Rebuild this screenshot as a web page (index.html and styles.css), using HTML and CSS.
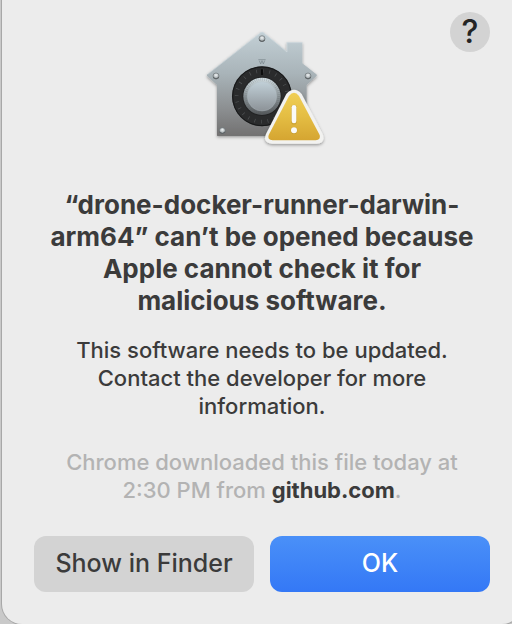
FILE: index.html
```html
<!DOCTYPE html>
<html lang="en">
<head>
<meta charset="utf-8">
<meta name="viewport" content="width=device-width, initial-scale=1">
<title>Gatekeeper alert</title>
<link rel="stylesheet" href="styles.css">
</head>
<body>
<main class="dialog" role="alertdialog" aria-labelledby="title" aria-describedby="message">
  <button class="help" type="button" aria-label="Help">?</button>
  <svg class="icon" viewBox="-6 0 408 408" aria-hidden="true">
    <defs>
      <linearGradient id="house" x1="0" y1="0" x2="0" y2="1">
        <stop offset="0" stop-color="#c3d0d6"/>
        <stop offset=".4" stop-color="#a9b4b9"/>
        <stop offset=".75" stop-color="#8b8e90"/>
        <stop offset="1" stop-color="#727171"/>
      </linearGradient>
      <linearGradient id="rim" x1="0" y1="0" x2="0" y2="1">
        <stop offset="0" stop-color="#d3dfe4"/>
        <stop offset=".5" stop-color="#8b9498"/>
        <stop offset="1" stop-color="#54575a"/>
      </linearGradient>
      <linearGradient id="knob" x1="0" y1="0" x2="0" y2="1">
        <stop offset="0" stop-color="#c1d0d8"/>
        <stop offset="1" stop-color="#8c9297"/>
      </linearGradient>
      <linearGradient id="gold" x1="0" y1="0" x2="0" y2="1">
        <stop offset="0" stop-color="#f0cf55"/>
        <stop offset=".5" stop-color="#e4bd43"/>
        <stop offset="1" stop-color="#d5a531"/>
      </linearGradient>
      <radialGradient id="screw" cx=".5" cy=".35" r=".65">
        <stop offset="0" stop-color="#f2f5f6"/>
        <stop offset=".6" stop-color="#b5bcbf"/>
        <stop offset="1" stop-color="#626769"/>
      </radialGradient>
      <filter id="shadow" x="-20%" y="-20%" width="140%" height="140%">
        <feDropShadow dx="0" dy="4" stdDeviation="4" flood-color="#000" flood-opacity=".38"/>
      </filter>
    </defs>
    <path d="M194 37Q198 33 202 37L272 94V67H319V130L361 163Q364 166 361 169L332 195V347H63V195L34 169Q31 166 34 163Z" fill="url(#house)" filter="url(#shadow)"/>
    <path d="M35 163L194 38Q198 35 202 38L273 96V68H318" fill="none" stroke="#dce5e9" stroke-width="2" opacity=".7"/>
    <path d="M64 346H331" stroke="#555" stroke-width="2" opacity=".6"/>
    <g fill="none" stroke="#77838a" stroke-width="2">
      <path d="M187 119H209M190 122L194 132L198 122L202 132L206 122"/>
    </g>
    <g fill="url(#screw)" stroke="#6d7477" stroke-width="2">
      <circle cx="198" cy="56" r="9"/>
      <circle cx="60" cy="168" r="9"/>
      <circle cx="336" cy="168" r="9"/>
      <circle cx="79" cy="332" r="9"/>
    </g>
    <g fill="none" stroke="#555b5e" stroke-width="3" stroke-linecap="round" opacity=".75">
      <path d="M190 61Q198 69 206 61M52 173Q60 181 68 173M328 173Q336 181 344 173M71 337Q79 345 87 337"/>
    </g>
    <circle cx="198" cy="229" r="90" fill="#2a2b2c"/>
    <circle cx="198" cy="229" r="88" fill="none" stroke="#161718" stroke-width="3"/>
    <circle cx="198" cy="229" r="76" fill="none" stroke="#505355" stroke-width="11" stroke-dasharray="2 17.9"/>
    <circle cx="198" cy="229" r="59" fill="#222324"/>
    <path d="M198 148V165" stroke="#080808" stroke-width="5"/>
    <circle cx="198" cy="229" r="56" fill="url(#rim)"/>
    <circle cx="198" cy="229" r="51" fill="none" stroke="#505659" stroke-width="9" stroke-dasharray="2 4" opacity=".25"/>
    <circle cx="198" cy="229" r="44" fill="url(#knob)" stroke="#b1bdc2" stroke-width="1"/>
    <path d="M271 222Q294 197 317 222L380 342Q390 369 362 371H228Q199 369 210 342Z" fill="#f2f2f0" filter="url(#shadow)"/>
    <path d="M279 228Q294 209 309 228L371 345Q375 359 359 361H230Q213 359 218 345Z" fill="url(#gold)"/>
    <path d="M294 263V305" stroke="#a9852c" stroke-width="17" stroke-linecap="round" opacity=".35"/>
    <path d="M294 262V303" stroke="#fafaf8" stroke-width="14" stroke-linecap="round"/>
    <circle cx="294" cy="332" r="10" fill="#a9852c" opacity=".35"/>
    <circle cx="294" cy="331" r="9" fill="#fafaf8"/>
  </svg>
  <h1 class="title" id="title">“drone-docker-runner-darwin-<wbr>arm64” can’t be opened because Apple cannot check it for malicious software.</h1>
  <p class="text" id="message">This software needs to be updated. Contact the developer for more information.</p>
  <p class="text source">Chrome downloaded this file today at 2:30 PM from <strong>github.com</strong>.</p>
  <div class="actions">
    <button class="button" type="button">Show in Finder</button>
    <button class="button primary" type="button">OK</button>
  </div>
</main>
</body>
</html>
```
FILE: styles.css
```css
* {
  box-sizing: border-box;
}

body {
  margin: 0;
  overflow: hidden;
  background: #c9c9c9;
  color: #3b3b3b;
  font-family: Inter, "Liberation Sans", sans-serif;
}

/* The sheet runs slightly past the right edge of the window. */
.dialog {
  position: relative;
  display: flex;
  flex-direction: column;
  align-items: center;
  margin: 0 -10px 0 2px;
  padding: 20px 32px 32px;
  border-radius: 0 0 20px 20px;
  background: #ececec;
  box-shadow: 0 0 0 1px #a8a8a8;
  text-align: center;
}

.help {
  position: absolute;
  top: 12px;
  right: 32px;
  width: 40px;
  height: 40px;
  padding: 0;
  border: 0;
  border-radius: 50%;
  background: #d3d3d3;
  color: #242424;
  font: 500 32px/40px Inter, "Liberation Sans", sans-serif;
}

.icon {
  width: 136px;
  height: 136px;
}

.title {
  margin: 33px 0 0;
  padding: 0 8px;
  font-size: 26px;
  font-weight: 700;
  line-height: 32px;
}

.text {
  margin: 19px 0 0;
  padding: 0 24px;
  font-size: 22px;
  font-weight: 500;
  line-height: 28px;
}

.source {
  margin-top: 28px;
  color: #b3b3b3;
}

.source strong {
  color: #3b3b3b;
}

.actions {
  display: grid;
  grid-template-columns: 1fr 1fr;
  gap: 16px;
  align-self: stretch;
  margin-top: 32px;
}

.button {
  height: 56px;
  padding: 0 0 2px;
  border: 0;
  border-radius: 12px;
  background: #d3d3d3;
  color: #3b3b3b;
  font: 500 25px/54px Inter, "Liberation Sans", sans-serif;
}

.primary {
  background: linear-gradient(#4a90f8, #3478f6);
  color: #fff;
}
```
